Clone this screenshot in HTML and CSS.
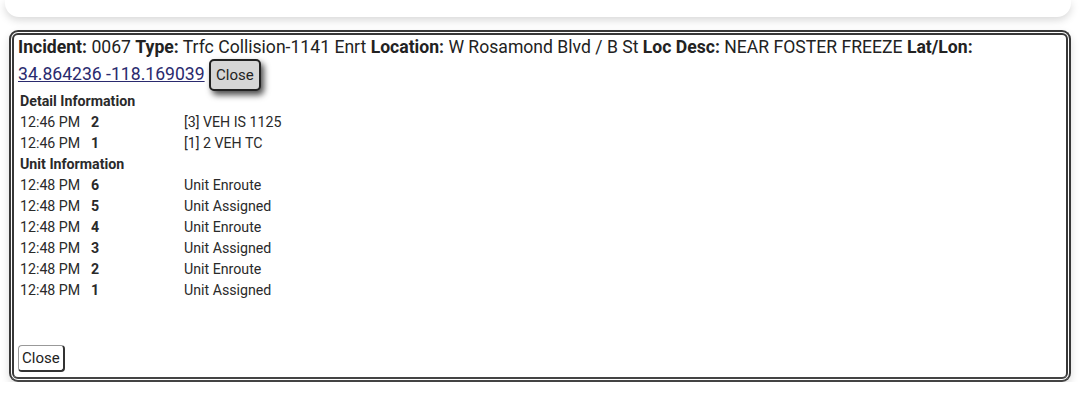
FILE: index.html
```html
<!DOCTYPE html>
<html>
<head>
<meta charset="utf-8">
<link rel="stylesheet" href="styles.css">
</head>
<body>
<div class="topcard"></div>
<div class="panel">
  <div class="header">
    <b>Incident:</b> 0067 <b>Type:</b> Trfc Collision-1141 Enrt <b>Location:</b> W Rosamond Blvd / B St <b>Loc Desc:</b> NEAR FOSTER FREEZE <b>Lat/Lon:</b><br>
    <a class="coords" href="#">34.864236 -118.169039</a> <button class="btn-top">Close</button>
  </div>
  <div class="details">
    <div class="section">Detail Information</div>
    <div class="row"><span class="time">12:46 PM</span><span class="num">2</span><span class="desc">[3] VEH IS 1125</span></div>
    <div class="row"><span class="time">12:46 PM</span><span class="num">1</span><span class="desc">[1] 2 VEH TC</span></div>
    <div class="section">Unit Information</div>
    <div class="row"><span class="time">12:48 PM</span><span class="num">6</span><span class="desc">Unit Enroute</span></div>
    <div class="row"><span class="time">12:48 PM</span><span class="num">5</span><span class="desc">Unit Assigned</span></div>
    <div class="row"><span class="time">12:48 PM</span><span class="num">4</span><span class="desc">Unit Enroute</span></div>
    <div class="row"><span class="time">12:48 PM</span><span class="num">3</span><span class="desc">Unit Assigned</span></div>
    <div class="row"><span class="time">12:48 PM</span><span class="num">2</span><span class="desc">Unit Enroute</span></div>
    <div class="row"><span class="time">12:48 PM</span><span class="num">1</span><span class="desc">Unit Assigned</span></div>
  </div>
  <button class="btn-bottom">Close</button>
</div>
</body>
</html>
```
FILE: styles.css
```css
html, body {
  margin: 0;
  background: #ffffff;
  font-family: Roboto, "Liberation Sans", sans-serif;
  color: #222;
}
.topcard {
  height: 17px;
  margin: 0 8px 0 5px;
  background: #fff;
  border-radius: 0 0 14px 14px;
  box-shadow: 0 3px 9px rgba(0,0,0,0.16);
}
.panel {
  margin: 13px 8px 0 9px;
  border: 5px double #383838;
  border-bottom-color: #444;
  border-radius: 9px;
  padding: 1px 4px 5px 4px;
  box-shadow: 0 4px 8px rgba(0,0,0,0.14);
  background: #fff;
}
.header {
  font-size: 17.6px;
  line-height: 23px;
}
.header b { font-weight: 700; }
.coords {
  color: #2a2a6e;
  text-decoration: underline;
}
.btn-top {
  font-family: Roboto, "Liberation Sans", sans-serif;
  font-size: 15px;
  color: #222;
  background: #d6d6d6;
  border: 2px solid #222;
  border-radius: 5px;
  padding: 5px 5px;
  margin-left: 0;
  box-shadow: 3px 4px 6px rgba(0,0,0,0.7);
}
.details {
  margin-top: 0;
  padding-left: 2px;
  font-size: 14.2px;
  color: #2a2a2a;
}
.section {
  font-weight: 700;
  height: 21px;
  line-height: 21px;
}
.row {
  display: grid;
  grid-template-columns: 71px 93px auto;
  height: 21px;
  line-height: 21px;
}
.num { font-weight: 700; }
.btn-bottom {
  display: block;
  margin-top: 44px;
  font-family: Roboto, "Liberation Sans", sans-serif;
  font-size: 15px;
  color: #222;
  background: #fff;
  border: 1px solid #999;
  border-right: 2px solid #333;
  border-bottom: 2px solid #333;
  border-radius: 4px;
  padding: 3px 3px;
}
```
